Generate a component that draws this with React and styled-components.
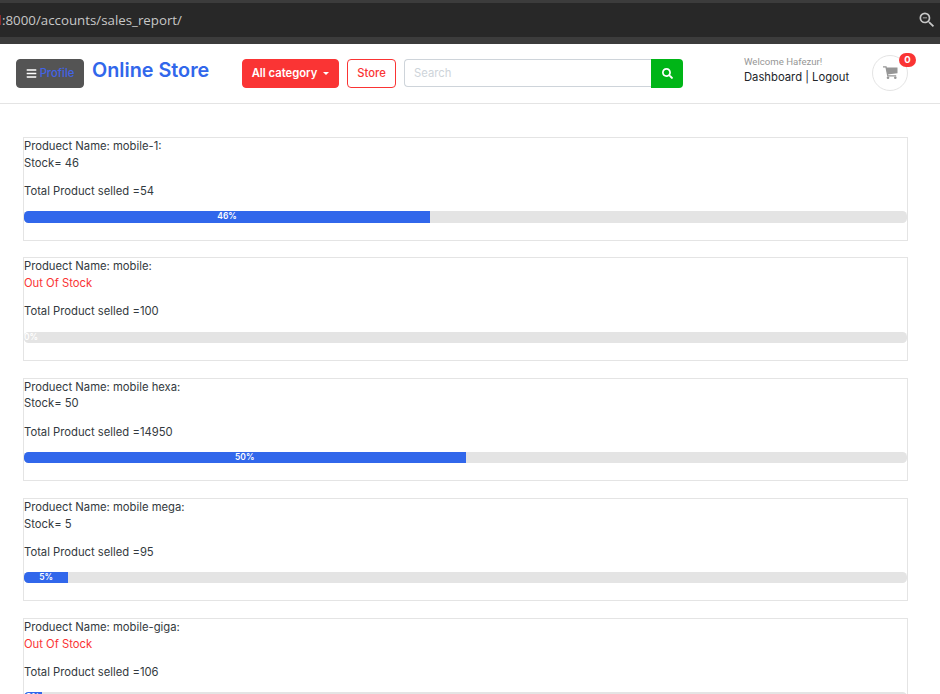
import React from "react";
import styled, { createGlobalStyle } from "styled-components";
import { FaBars, FaSearch } from "react-icons/fa";
import { MdZoomOut } from "react-icons/md";

const Global = createGlobalStyle`
  * { box-sizing: border-box; }
  html, body { margin: 0; padding: 0; }
  body {
    width: 940px; height: 694px; overflow: hidden; background: #fff;
    font-family: Inter, "Liberation Sans", sans-serif;
    font-size: 11.25px; line-height: 16.875px; color: #333a40;
  }
  p { margin: 0; }
`;

const Page = styled.div`
  width: 940px;
  height: 694px;
  overflow: hidden;
`;

const AddressBar = styled.div`
  height: 44px;
  border-top: 3px solid #3c3c3c;
  border-bottom: 7px solid #3c3c3c;
  background: #282828;
  display: flex;
  align-items: center;
  justify-content: space-between;
  padding: 0 3px 0 0;
  color: #c7c7c7;
`;

const Url = styled.span`
  display: flex;
  align-items: center;
  font: 13.3px/20px "Open Sans", "Noto Sans", sans-serif;
`;

const UrlEdge = styled.i`
  width: 1px;
  height: 10px;
  margin-right: 1px;
  background: #8c2b2b;
`;

const Header = styled.header`
  height: 60px;
  border-bottom: 1px solid #e4e4e4;
  display: flex;
  align-items: flex-start;
  padding: 15px 24px 0 16px;
`;

const Button = styled.button`
  height: 29px;
  width: ${(p) => p.$width}px;
  padding: 0;
  border-radius: 4px;
  border: 1px solid ${(p) => p.$line};
  background: ${(p) => p.$fill};
  color: ${(p) => p.$ink};
  font: ${(p) => p.$weight || 500} 11.25px/17px Inter, sans-serif;
  display: flex;
  align-items: center;
  justify-content: center;
  margin-right: 8px;
  flex: none;
`;

const ProfileLabel = styled.span`
  color: #4263e6;
  margin-left: 3px;
`;

const Brand = styled.div`
  width: 150px;
  flex: none;
  margin-top: -2px;
  font-size: 19.8px;
  line-height: 26px;
  font-weight: 600;
  color: #3167eb;
  white-space: nowrap;
`;

const Caret = styled.i`
  border: 3.5px solid transparent;
  border-top-color: #fff;
  border-bottom: 0;
  margin-left: 6px;
`;

const Search = styled.div`
  display: flex;
  flex: none;
  width: 279px;
`;

const SearchInput = styled.input`
  width: 247px;
  height: 28px;
  border: 1px solid #ced4da;
  border-right: 0;
  border-radius: 4px 0 0 4px;
  padding: 0 0 0 9px;
  outline: 0;
  font: 11.25px/17px Inter, sans-serif;
  &::placeholder { color: #ced4da; opacity: 1; }
`;

const SearchButton = styled.button`
  width: 32px;
  height: 29px;
  padding: 0;
  border: 0;
  border-radius: 0 4px 4px 0;
  background: #00b517;
  color: #fff;
  display: flex;
  align-items: center;
  justify-content: center;
`;

const Account = styled.div`
  width: 128px;
  flex: none;
  margin: -5px 0 0 61px;
  white-space: nowrap;
`;

const Welcome = styled.div`
  font: 9.6px/15px Roboto, sans-serif;
  color: #969696;
`;

const Links = styled.div`
  font-size: 11.25px;
  line-height: 17px;
  color: #212529;
`;

const Cart = styled.div`
  position: relative;
  width: 36px;
  height: 36px;
  flex: none;
  margin-top: -4px;
  border: 1px solid #e4e4e4;
  border-radius: 50%;
  display: flex;
  align-items: center;
  justify-content: center;
  color: #969696;
`;

const Badge = styled.span`
  position: absolute;
  top: -3px;
  right: -9px;
  width: 17px;
  height: 14px;
  border-radius: 7px;
  background: #fa3434;
  color: #fff;
  font-size: 9.5px;
  line-height: 14px;
  font-weight: 700;
  text-align: center;
`;

const Report = styled.main`
  padding: 33px 32px 0 23px;
`;

const Card = styled.section`
  height: 103.5px;
  margin-bottom: 16.75px;
  border: 1px solid #e4e4e4;
`;

const Line = styled.p`
  color: ${(p) => (p.$alert ? "#fa3434" : "#333a40")};
`;

const Sold = styled.p`
  margin: 11.25px 0 11.375px;
`;

const Track = styled.div`
  height: 11.25px;
  overflow: hidden;
  border-radius: 4.5px;
  background: #e4e4e4;
`;

const Fill = styled.div`
  height: 100%;
  display: flex;
  align-items: center;
  justify-content: ${(p) => (p.$empty ? "flex-start" : "center")};
  background: #3167eb;
  color: #fff;
  font-size: 8.44px;
  line-height: 11px;
  font-weight: 600;
`;

const CartIcon = () => (
  <svg width="15" height="14" viewBox="0 0 15 14" aria-hidden="true">
    <path d="M0 .8h3l1.8 9h8.4" fill="none" stroke="currentColor" strokeWidth="1.3" />
    <path d="M3.2 1.5h11.3v5.8L4.4 8.5z" fill="currentColor" />
    <circle cx="5" cy="11.8" r="1.3" fill="currentColor" />
    <circle cx="12.3" cy="11.8" r="1.3" fill="currentColor" />
  </svg>
);

const products = [
  { name: "mobile-1", stock: 46, sold: 54, percent: 46 },
  { name: "mobile", stock: 0, sold: 100, percent: 0 },
  { name: "mobile hexa", stock: 50, sold: 14950, percent: 50 },
  { name: "mobile mega", stock: 5, sold: 95, percent: 5 },
  { name: "mobile-giga", stock: 0, sold: 106, percent: 2 },
];

export default function App() {
  return (
    <Page>
      <Global />
      <AddressBar>
        <Url>
          <UrlEdge />
          :8000/accounts/sales_report/
        </Url>
        <MdZoomOut size={20} />
      </AddressBar>
      <Header>
        <Button $width={68} $fill="#545454" $line="#545454" $ink="#fff">
          <FaBars size={11} />
          <ProfileLabel>Profile</ProfileLabel>
        </Button>
        <Brand>Online Store</Brand>
        <Button $width={97} $fill="#fa3434" $line="#fa3434" $ink="#fff" $weight={600}>
          All category <Caret />
        </Button>
        <Button $width={49} $fill="#fff" $line="#fa3434" $ink="#fa3434">
          Store
        </Button>
        <Search>
          <SearchInput placeholder="Search" />
          <SearchButton aria-label="Search">
            <FaSearch size={11} />
          </SearchButton>
        </Search>
        <Account>
          <Welcome>Welcome Hafezur!</Welcome>
          <Links>Dashboard | Logout</Links>
        </Account>
        <Cart>
          <CartIcon />
          <Badge>0</Badge>
        </Cart>
      </Header>
      <Report>
        {products.map((p) => (
          <Card key={p.name}>
            <Line>Produect Name: {p.name}:</Line>
            <Line $alert={!p.stock}>{p.stock ? `Stock= ${p.stock}` : "Out Of Stock"}</Line>
            <Sold>Total Product selled ={p.sold}</Sold>
            <Track>
              <Fill $empty={!p.percent} style={{ width: `${p.percent}%` }}>
                {p.percent}%
              </Fill>
            </Track>
          </Card>
        ))}
      </Report>
    </Page>
  );
}
